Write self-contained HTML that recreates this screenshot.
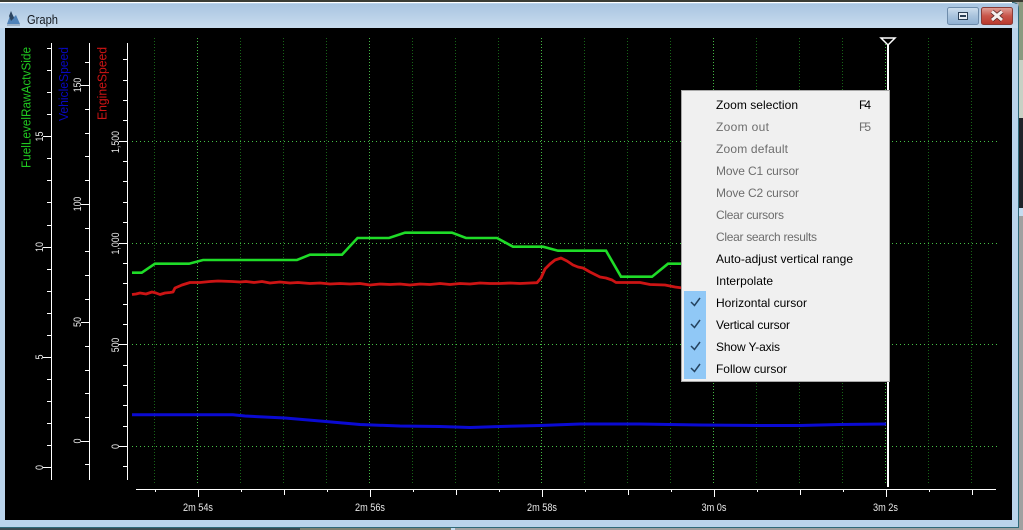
<!DOCTYPE html>
<html><head><meta charset="utf-8"><title>Graph</title>
<style>html,body{margin:0;padding:0;background:#000;overflow:hidden}svg{display:block}text{font-family:"Liberation Sans",sans-serif}</style></head>
<body>
<svg xmlns="http://www.w3.org/2000/svg" width="1023" height="530" viewBox="0 0 1023 530">
<defs>
<linearGradient id="tb" x1="0" y1="0" x2="0" y2="1"><stop offset="0" stop-color="#a9c5e1"/><stop offset="1" stop-color="#c9dcee"/></linearGradient>
<linearGradient id="btn" x1="0" y1="0" x2="0" y2="1"><stop offset="0" stop-color="#cfdfee"/><stop offset=".5" stop-color="#a9c3dd"/><stop offset="1" stop-color="#8fb0d2"/></linearGradient>
<linearGradient id="cls" x1="0" y1="0" x2="0" y2="1"><stop offset="0" stop-color="#e0a39b"/><stop offset=".5" stop-color="#c9564a"/><stop offset="1" stop-color="#b8382c"/></linearGradient>
</defs>
<!-- surroundings -->
<rect width="1023" height="530" fill="#a0a0a0"/>
<rect x="1019" y="0" width="4" height="60" fill="#8a9a80"/>
<rect x="1019" y="60" width="4" height="58" fill="#c8d0c4"/>
<rect x="1019" y="118" width="4" height="90" fill="#20242a"/>
<rect x="1019" y="208" width="4" height="8" fill="#c5dcf0"/>
<rect x="0" y="527" width="451" height="3" fill="#3a4a50"/>
<rect x="300" y="528" width="151" height="2" fill="#7d8070"/>
<rect x="451" y="527" width="4" height="3" fill="#c5dcf0"/>
<rect x="0" y="0" width="1023" height="2" fill="#3a3c34"/>
<!-- window -->
<path d="M0 2H1012Q1019 2 1019 9V528H0Z" fill="#2f6a7a"/>
<path d="M0 3H1012Q1018 3 1018 9V527H0Z" fill="#bad4ec"/>
<path d="M0 2.5H1012" stroke="#fff" fill="none"/>
<rect x="0" y="4" width="1018" height="24" fill="url(#tb)"/>
<rect x="5" y="28" width="1007" height="492" fill="#000"/>
<!-- title icon -->
<path d="M7 24L11 13L14 17L16 15L20 24Z" fill="#4f82b8"/>
<path d="M9 16L11 11L14 18L11 21Z" fill="#2c4560"/>
<path d="M7 25H20" stroke="#7a8ea4"/>
<text x="27" y="24" font-size="13" fill="#151a20" textLength="31" lengthAdjust="spacingAndGlyphs">Graph</text>
<!-- buttons -->
<rect x="947.5" y="7.5" width="31" height="17" rx="2" fill="url(#btn)" stroke="#6e8cab"/>
<rect x="958.5" y="12.5" width="9" height="7" fill="#e8eef5" stroke="#2b3f55"/>
<rect x="960" y="15" width="6" height="2" fill="#2b3f55"/>
<rect x="981.5" y="7.5" width="31" height="17" rx="2" fill="url(#cls)" stroke="#8a3b36"/>
<path d="M992 11.5L1002 20M1002 11.5L992 20" stroke="#5b2a28" stroke-width="4.5"/>
<path d="M992 11.5L1002 20M1002 11.5L992 20" stroke="#f5f1ee" stroke-width="3"/>
<!-- vertical grid -->
<g fill="none" stroke-dasharray="1 2" shape-rendering="crispEdges">
<path stroke="#176417" d="M154.5 38V484M240.5 38V484M283.5 38V484M326.5 38V484M412.5 38V484M455.5 38V484M498.5 38V484M584.5 38V484M627.5 38V484M670.5 38V484M756.5 38V484M799.5 38V484M842.5 38V484M928.5 38V484M971.5 38V484"/>
<path stroke="#44b844" d="M197.5 38V484M369.5 38V484M541.5 38V484M713.5 38V484M885.5 38V484"/>
</g>
<g fill="none" stroke="#46c046" stroke-dasharray="1 3" shape-rendering="crispEdges">
<path d="M132 141.5H1000M132 243.5H1000M132 344.5H1000M132 446.5H1000"/>
</g>
<!-- y axes -->
<g fill="none" stroke="#fff" shape-rendering="crispEdges">
<path d="M51.5 43V480M47 445.5H51M47 423.5H51M47 401.5H51M47 379.5H51M47 335.5H51M47 313.5H51M47 291.5H51M47 269.5H51M47 225.5H51M47 202.5H51M47 180.5H51M47 158.5H51M47 114.5H51M47 92.5H51M47 70.5H51M47 48.5H51M43 467.5H51M43 357.5H51M43 247.5H51M43 136.5H51"/>
<path d="M89.5 43V480M85 464.5H89M85 417.5H89M85 393.5H89M85 370.5H89M85 346.5H89M85 299.5H89M85 275.5H89M85 251.5H89M85 228.5H89M85 180.5H89M85 156.5H89M85 133.5H89M85 109.5H89M85 62.5H89M81 441.5H89M81 322.5H89M81 204.5H89M81 85.5H89"/>
<path d="M127.5 43V480M123 466.5H127M123 426.5H127M123 405.5H127M123 385.5H127M123 365.5H127M123 324.5H127M123 304.5H127M123 283.5H127M123 263.5H127M123 222.5H127M123 202.5H127M123 181.5H127M123 161.5H127M123 120.5H127M123 100.5H127M123 80.5H127M123 59.5H127M119 446.5H127M119 344.5H127M119 243.5H127M119 141.5H127"/>
<!-- x axis -->
<path d="M136 489.5H996M155.5 489V492M241.5 489V492M327.5 489V492M413.5 489V492M499.5 489V492M585.5 489V492M671.5 489V492M757.5 489V492M843.5 489V492M929.5 489V492M284.5 489V495M456.5 489V495M628.5 489V495M800.5 489V495M972.5 489V495M198.5 489V497M370.5 489V497M542.5 489V497M714.5 489V497M886.5 489V497"/>
</g>
<!-- axis titles -->
<g font-size="13">
<text transform="translate(30.5 168) rotate(-90)" fill="#20c820" textLength="121" lengthAdjust="spacingAndGlyphs">FuelLevelRawActvSide</text>
<text transform="translate(68 121) rotate(-90)" fill="#0808c0" textLength="74" lengthAdjust="spacingAndGlyphs">VehicleSpeed</text>
<text transform="translate(106.5 120) rotate(-90)" fill="#cc1414" textLength="73" lengthAdjust="spacingAndGlyphs">EngineSpeed</text>
</g>
<!-- axis numbers -->
<g font-size="11" fill="#e8e8e8" text-anchor="middle">
<text transform="translate(43 467.5) rotate(-90)" textLength="5" lengthAdjust="spacingAndGlyphs">0</text>
<text transform="translate(43 357) rotate(-90)" textLength="5" lengthAdjust="spacingAndGlyphs">5</text>
<text transform="translate(43 247) rotate(-90)" textLength="10" lengthAdjust="spacingAndGlyphs">10</text>
<text transform="translate(43 136.5) rotate(-90)" textLength="10" lengthAdjust="spacingAndGlyphs">15</text>
<text transform="translate(81 441) rotate(-90)" textLength="5" lengthAdjust="spacingAndGlyphs">0</text>
<text transform="translate(81 322) rotate(-90)" textLength="10" lengthAdjust="spacingAndGlyphs">50</text>
<text transform="translate(81 204) rotate(-90)" textLength="14.5" lengthAdjust="spacingAndGlyphs">100</text>
<text transform="translate(81 85) rotate(-90)" textLength="14.5" lengthAdjust="spacingAndGlyphs">150</text>
<text transform="translate(119 446.5) rotate(-90)" textLength="5" lengthAdjust="spacingAndGlyphs">0</text>
<text transform="translate(119 345) rotate(-90)" textLength="14.5" lengthAdjust="spacingAndGlyphs">500</text>
<text transform="translate(119 243.5) rotate(-90)" textLength="22" lengthAdjust="spacingAndGlyphs">1,000</text>
<text transform="translate(119 142) rotate(-90)" textLength="22" lengthAdjust="spacingAndGlyphs">1,500</text>
</g>
<!-- x labels -->
<g font-size="11" fill="#e8e8e8" text-anchor="middle">
<text x="198" y="511" textLength="30" lengthAdjust="spacingAndGlyphs">2m 54s</text>
<text x="370" y="511" textLength="30" lengthAdjust="spacingAndGlyphs">2m 56s</text>
<text x="542" y="511" textLength="30" lengthAdjust="spacingAndGlyphs">2m 58s</text>
<text x="714" y="511" textLength="25" lengthAdjust="spacingAndGlyphs">3m 0s</text>
<text x="885.5" y="511" textLength="25" lengthAdjust="spacingAndGlyphs">3m 2s</text>
</g>
<!-- data -->
<polyline fill="none" stroke="#0a0ad2" stroke-width="3" points="132,414.7 233,414.7 245,416 285,418 320,421 360,424.5 400,426 440,426.5 470,427.5 500,426.5 540,425.5 580,424 640,424 700,425 760,425.5 800,425.5 840,424.5 886,424"/>
<polyline fill="none" stroke="#1fdc28" stroke-width="2.6" points="132,272.7 141.7,272.7 155,263.7 189,263.7 203,260 297,260 310,254.7 342,254.7 357.5,238 389,238 405,232.7 452,232.7 466,238 497,238 513,246.7 543,246.7 558,250.7 606,250.7 621,276.7 652,276.7 668,263.7 690,263.7"/>
<polyline fill="none" stroke="#cc1414" stroke-width="2.8" stroke-linejoin="round" points="132,294.5 136,294 140,293 146,294 152,292 156,293 160,294.5 165,293 170,292.5 173,292 175,288 182,285 190,282.5 200,282.5 210,281.5 218,281 232,281.5 240,282 246,281.5 254,282.5 262,281.5 270,283 280,282 290,283 298,282.5 310,283.5 320,283 330,284 340,283.5 350,284 360,283.5 370,285 380,284 390,284.5 400,284 410,285 420,284 430,284.5 440,283.5 450,284.5 460,283.5 470,284 480,283 490,283.5 500,283.5 510,283 520,283.5 530,283 537,282.7 541,278 545,269 550,264 555,260 561,258 567,261 573,265 578,267 583,268 590,272 594,274 600,277 606,278 612,280 616,282.5 640,282.5 650,284.5 665,285 675,287 690,289"/>
<!-- cursor -->
<rect x="887" y="44" width="2" height="443" fill="#fff"/>
<path d="M881 38H895L888 45Z" fill="#000" stroke="#fff" stroke-width="1.5"/>
<!-- menu -->
<rect x="681.5" y="90.5" width="208" height="291" fill="#f0f0f0" stroke="#a8a8a8"/>
<rect x="684" y="291" width="22" height="88" fill="#90c8f6"/>
<g fill="none" stroke="#25435f" stroke-width="1.5">
<path d="M691 302L694.5 305.5L700 298"/>
<path d="M691 324L694.5 327.5L700 320"/>
<path d="M691 346L694.5 349.5L700 342"/>
<path d="M691 368L694.5 371.5L700 364"/>
</g>
<g font-size="12" fill="#000">
<text x="716" y="109" textLength="82">Zoom selection</text>
<text x="859" y="109" textLength="12">F4</text>
<text x="716" y="263" textLength="137">Auto-adjust vertical range</text>
<text x="716" y="285" textLength="57">Interpolate</text>
<text x="716" y="307" textLength="91">Horizontal cursor</text>
<text x="716" y="329" textLength="74">Vertical cursor</text>
<text x="716" y="351" textLength="64">Show Y-axis</text>
<text x="716" y="373" textLength="71">Follow cursor</text>
</g>
<g font-size="12" fill="#6d6d6d">
<text x="716" y="131" textLength="53">Zoom out</text>
<text x="859" y="131" textLength="12">F5</text>
<text x="716" y="153" textLength="72">Zoom default</text>
<text x="716" y="175" textLength="83">Move C1 cursor</text>
<text x="716" y="197" textLength="83">Move C2 cursor</text>
<text x="716" y="219" textLength="68">Clear cursors</text>
<text x="716" y="241" textLength="101">Clear search results</text>
</g>
</svg>
</body></html>
